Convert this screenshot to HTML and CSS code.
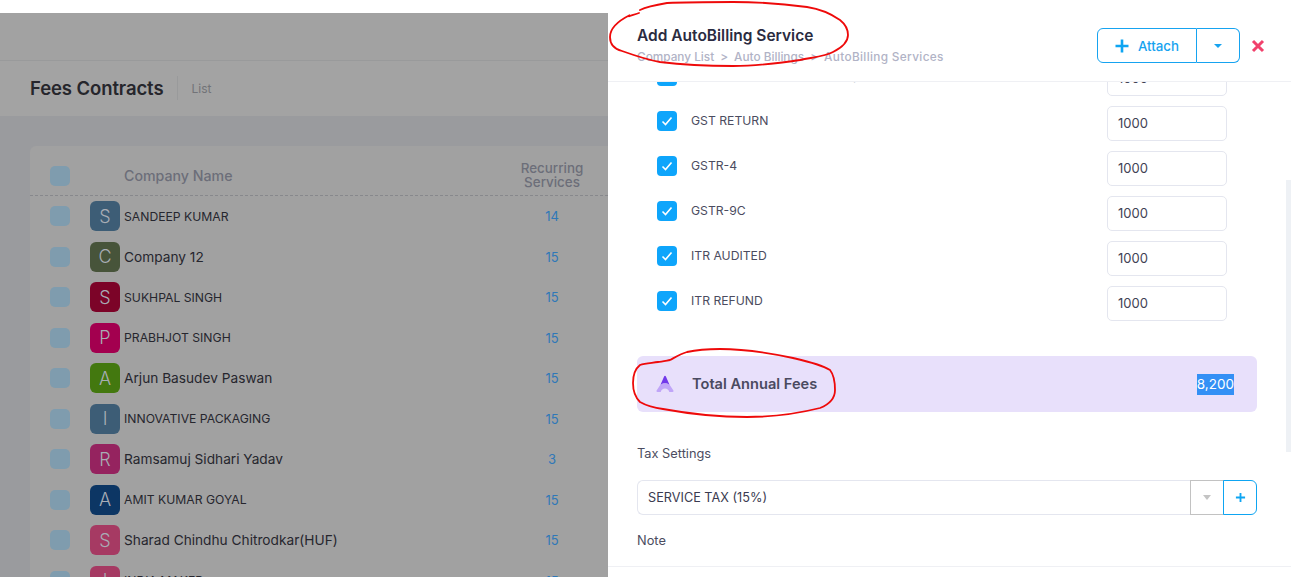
FILE: index.html
```html
<!DOCTYPE html>
<html lang="en">
<head>
<meta charset="utf-8">
<title>Add AutoBilling Service</title>
<link rel="stylesheet" href="styles.css">
</head>
<body>
<div class="app">
  <section class="backdrop">
    <div class="topbar"></div>
    <div class="subhead">
      <h1 class="page-title">Fees Contracts</h1>
      <span class="page-crumb">List</span>
    </div>
    <div class="content">
      <div class="card">
        <div class="thead">
          <span class="box"></span>
          <span class="th-name">Company Name</span>
          <span class="th-count">Recurring Services</span>
        </div>
        <div class="row"><span class="box"></span><span class="avatar a1">S</span><span class="name caps">SANDEEP KUMAR</span><span class="count">14</span></div>
        <div class="row"><span class="box"></span><span class="avatar a2">C</span><span class="name">Company 12</span><span class="count">15</span></div>
        <div class="row"><span class="box"></span><span class="avatar a3">S</span><span class="name caps">SUKHPAL SINGH</span><span class="count">15</span></div>
        <div class="row"><span class="box"></span><span class="avatar a4">P</span><span class="name caps">PRABHJOT SINGH</span><span class="count">15</span></div>
        <div class="row"><span class="box"></span><span class="avatar a5">A</span><span class="name">Arjun Basudev Paswan</span><span class="count">15</span></div>
        <div class="row"><span class="box"></span><span class="avatar a1">I</span><span class="name caps">INNOVATIVE PACKAGING</span><span class="count">15</span></div>
        <div class="row"><span class="box"></span><span class="avatar a6">R</span><span class="name">Ramsamuj Sidhari Yadav</span><span class="count">3</span></div>
        <div class="row"><span class="box"></span><span class="avatar a7">A</span><span class="name caps">AMIT KUMAR GOYAL</span><span class="count">15</span></div>
        <div class="row"><span class="box"></span><span class="avatar a8">S</span><span class="name">Sharad Chindhu Chitrodkar(HUF)</span><span class="count">15</span></div>
        <div class="row"><span class="box"></span><span class="avatar a8">I</span><span class="name caps">INDIA MAKER</span><span class="count">15</span></div>
      </div>
    </div>
  </section>

  <aside class="drawer">
    <header class="drawer-head">
      <div class="drawer-titles">
        <h2 class="drawer-title">Add AutoBilling Service</h2>
        <div class="crumbs"><span>Company List</span><span class="sep">&gt;</span><span>Auto Billings</span><span class="sep">&gt;</span><span class="crumb-last">AutoBilling Services</span></div>
      </div>
      <div class="btn-group">
        <button class="btn-attach" type="button">
          <svg class="plus-big" viewBox="0 0 14 14" aria-hidden="true"><path d="M7 0.5v13M0.5 7h13"/></svg>
          <span>Attach</span>
        </button>
        <button class="btn-caret" type="button"><span class="caret"></span></button>
      </div>
      <svg class="close" viewBox="0 0 14 14" aria-hidden="true"><path d="M2 2l10 10M12 2l-10 10"/></svg>
    </header>

    <div class="drawer-body">
      <div class="services">
        <div class="service"><span class="check"><svg viewBox="0 0 20 20" aria-hidden="true"><path d="M5.500 10.500l3 3 6-7"/></svg></span><span class="service-name">GST ANNUAL RETURN Composition</span><span class="amount">1000</span></div>
        <div class="service"><span class="check"><svg viewBox="0 0 20 20" aria-hidden="true"><path d="M5.500 10.500l3 3 6-7"/></svg></span><span class="service-name">GST RETURN</span><span class="amount">1000</span></div>
        <div class="service"><span class="check"><svg viewBox="0 0 20 20" aria-hidden="true"><path d="M5.500 10.500l3 3 6-7"/></svg></span><span class="service-name">GSTR-4</span><span class="amount">1000</span></div>
        <div class="service"><span class="check"><svg viewBox="0 0 20 20" aria-hidden="true"><path d="M5.500 10.500l3 3 6-7"/></svg></span><span class="service-name">GSTR-9C</span><span class="amount">1000</span></div>
        <div class="service"><span class="check"><svg viewBox="0 0 20 20" aria-hidden="true"><path d="M5.500 10.500l3 3 6-7"/></svg></span><span class="service-name">ITR AUDITED</span><span class="amount">1000</span></div>
        <div class="service"><span class="check"><svg viewBox="0 0 20 20" aria-hidden="true"><path d="M5.500 10.500l3 3 6-7"/></svg></span><span class="service-name">ITR REFUND</span><span class="amount">1000</span></div>
      </div>

      <div class="total">
        <svg class="total-icon" viewBox="0 0 18 18" aria-hidden="true">
          <path class="logo-light" d="M5.200 8.500L0.600 15.600c-.4.7 0 1.400.8 1.400h3.300c.5-2 2.200-3.400 4.300-3.400s3.800 1.400 4.300 3.400h3.300c.8 0 1.200-.7.8-1.400L12.800 8.500z"/>
          <path class="logo-dark" d="M9 0.800c-.4 0-.7.2-.9.6L4.600 9.600c1.300-.9 2.800-1.400 4.400-1.400s3.100.5 4.400 1.400L9.900 1.400c-.2-.4-.5-.6-.9-.6z"/>
        </svg>
        <span class="total-label">Total Annual Fees</span>
        <span class="total-value">8,200</span>
      </div>

      <div class="field-label">Tax Settings</div>
      <div class="tax-row">
        <div class="tax-select">SERVICE TAX (15%)</div>
        <div class="tax-drop"><span class="caret-grey"></span></div>
        <div class="tax-add"><svg viewBox="0 0 12 12" aria-hidden="true"><path d="M6 1v10M1 6h10"/></svg></div>
      </div>
      <div class="field-label note">Note</div>
    </div>

    <footer class="drawer-foot"></footer>
    <div class="scrollbar"></div>
  </aside>

  <svg class="scribbles" viewBox="0 0 1291 577" aria-hidden="true">
    <path d="M639 13C632 15 626 18 630 15C618 21 610 29 610 37C610 45 614 49 622 51C636 56 648 60 660 62C684 65 708 66 733 66C758 66 780 63 800 60C815 57 826 56 833 52C843 47 848 42 848 35C848 28 845 24 840 20C830 13 820 9 807 7C785 4 760 2 733 2C710 2 688 2 667 3C655 5 646 7 640 10"/>
    <path d="M658 362C652 363 645 363 640 365C635 369 633 376 633 383C633 391 636 398 640 402C647 406 655 408 663 409C690 414 720 417 747 417C775 417 800 413 820 408C830 404 835 398 835 390C835 382 834 375 830 370C820 364 806 361 793 358C770 353 745 349 720 349C708 349 696 350 687 352C680 354 674 358 670 360C665 361 661 362 658 362"/>
  </svg>
</div>
</body>
</html>
```
FILE: styles.css
```css
* { box-sizing: border-box; }
html, body { margin: 0; padding: 0; height: 100%; overflow: hidden; background: #fff; }
body { font-family: Inter, "Noto Sans", sans-serif; color: #3f4254; }
h1, h2 { margin: 0; }

.app { position: relative; display: flex; width: 1291px; height: 577px; overflow: hidden; }

/* Dimmed page behind the drawer */
.backdrop { width: 608px; flex: none; margin-top: 13px; display: flex; flex-direction: column; background: #9a9b9e; overflow: hidden; }
.topbar { height: 48px; flex: none; background: #a2a2a2; border-bottom: 1px solid #999a9b; }
.subhead { height: 55px; flex: none; display: flex; align-items: center; padding: 0 0 1px 30px; background: #a3a3a3; }
.page-title { font-size: 18.500px; font-weight: 600; color: #26262c; line-height: 24px; letter-spacing: -0.1px; padding-right: 14px; border-right: 1px solid #999a9b; height: 24px; }
.page-crumb { font-size: 12px; color: #727378; margin-left: 13px; }
.content { padding: 30px 0 0 30px; }
.card { background: #a1a1a1; border-radius: 6px 0 0 0; }
.thead { height: 50px; display: flex; align-items: center; padding: 10px 0 0 20px; border-bottom: 1px dashed #87888c; }
.box { width: 20px; height: 20px; flex: none; border-radius: 5px; background: #7f9cae; }
.th-name { margin-left: 54px; flex: 1; font-size: 14.200px; font-weight: 500; color: #6c6e79; }
.th-count { width: 80px; margin-right: 16px; text-align: center; font-size: 13.400px; line-height: 13.500px; font-weight: 500; color: #6c6e79; }
.row { height: 40.500px; display: flex; align-items: center; padding-left: 20px; }
.avatar { width: 30px; height: 30px; flex: none; margin-left: 20px; border-radius: 6px; display: flex; align-items: center; justify-content: center; font-size: 18px; font-weight: 300; color: #a8adb5; }
.a1 { background: #3d5d76; }
.a2 { background: #47543a; }
.a3 { background: #7c0428; }
.a4 { background: #a3004f; }
.a5 { background: #43780f; }
.a6 { background: #95235f; }
.a7 { background: #0c3664; }
.a8 { background: #a63a63; }
.name { margin-left: 4px; flex: 1; font-size: 13.700px; color: #26262e; }
.caps { font-size: 12.200px; }
.count { width: 80px; margin-right: 16px; text-align: center; font-size: 13px; color: #2f78b8; }

/* Drawer */
.drawer { position: relative; flex: 1; min-width: 0; display: flex; flex-direction: column; background: #fff; }
.drawer-head { height: 82px; flex: none; display: flex; padding: 28px 0 0 29px; border-bottom: 1px solid #eff0f4; }
.drawer-titles { flex: 1; min-width: 0; }
.drawer-title { font-size: 15.500px; font-weight: 600; line-height: 16px; color: #2a2b40; }
.crumbs { display: flex; gap: 6px; margin-top: 6px; font-size: 11.800px; line-height: 14px; font-weight: 500; color: #b1b3c6; }
.crumb-last { letter-spacing: 0.35px; }
.btn-group { display: flex; width: 143px; height: 35px; flex: none; }
.btn-attach, .btn-caret { background: #fff; border: 1px solid #16a3f0; font: inherit; padding: 0; display: flex; align-items: center; justify-content: center; }
.btn-attach { width: 100px; gap: 9px; border-radius: 6px 0 0 6px; font-size: 13.300px; font-weight: 500; color: #16a3f0; }
.btn-caret { width: 43px; border-left: none; border-radius: 0 6px 6px 0; }
.caret { width: 0; height: 0; border-left: 4px solid transparent; border-right: 4px solid transparent; border-top: 4px solid #16a3f0; }
.plus-big { width: 14px; height: 14px; }
.plus-big path { fill: none; stroke: #0ea5f2; stroke-width: 2.600; }
.close { width: 14px; height: 14px; flex: none; margin: 11px 26px 0 11px; }
.close path { fill: none; stroke: #f1416c; stroke-width: 3; }

.drawer-body { flex: 1; min-height: 0; overflow: hidden; padding: 0 34px 0 29px; }
.services { margin-top: -21px; }
.service { height: 45px; display: flex; align-items: flex-start; padding-left: 20px; }
.check { width: 20px; height: 20px; flex: none; margin-top: 5px; border-radius: 4px; background: #0ea5fb; }
.check svg { display: block; width: 20px; height: 20px; fill: none; stroke: #fff; stroke-width: 1.600; }
.service-name { flex: 1; margin-left: 14px; margin-top: 5px; font-size: 12.200px; line-height: 19px; white-space: nowrap; color: #4b4c60; }
.amount { width: 120px; height: 35px; flex: none; margin-right: 30px; padding: 0 0 2px 10px; display: flex; align-items: center; border: 1px solid #e4e6ef; border-radius: 5px; font-size: 13px; color: #3f4254; }

.total { height: 56px; margin-top: 25px; display: flex; align-items: center; padding: 0 23px 0 19px; background: #e8e0fb; border-radius: 6px; }
.total-icon { width: 18px; height: 18px; flex: none; }
.logo-light { fill: #c0a5f8; }
.logo-dark { fill: #7239ea; }
.total-label { flex: 1; margin-left: 18px; font-size: 14.600px; font-weight: 600; color: #4a4a60; }
.total-value { height: 21px; line-height: 21px; font-size: 13.500px; color: #fff; background: #3390f5; }

.field-label { margin-top: 34px; font-size: 12.800px; line-height: 16px; color: #4b4c60; }
.tax-row { display: flex; height: 35px; margin-top: 18px; }
.tax-select { flex: 1; display: flex; align-items: center; padding: 0 0 1px 10px; border: 1px solid #e4e6ef; border-right: none; border-radius: 6px 0 0 6px; font-size: 12.700px; color: #3a3b50; }
.tax-drop { width: 34px; flex: none; display: flex; align-items: center; justify-content: center; border: 1px solid #c2c2c2; }
.caret-grey { width: 0; height: 0; border-left: 4.500px solid transparent; border-right: 4.500px solid transparent; border-top: 5px solid #c4c4c4; }
.tax-add { width: 34px; flex: none; margin-left: -1px; display: flex; align-items: center; justify-content: center; border: 1px solid #0ea5f2; border-radius: 0 6px 6px 0; }
.tax-add svg { width: 11px; height: 11px; fill: none; stroke: #0ea5f2; stroke-width: 2; }
.note { margin-top: 18px; }
.drawer-foot { height: 11px; flex: none; border-top: 1px solid #eff0f4; }
.scrollbar { position: absolute; right: 0; top: 180px; width: 5px; height: 272px; background: #eef1f5; }

/* Hand-drawn red annotations lying over the screenshot */
.scribbles { position: absolute; left: 0; top: 0; width: 1291px; height: 577px; pointer-events: none; }
.scribbles path { fill: none; stroke: #ee0a0a; stroke-width: 1.800; stroke-linecap: round; }
```
